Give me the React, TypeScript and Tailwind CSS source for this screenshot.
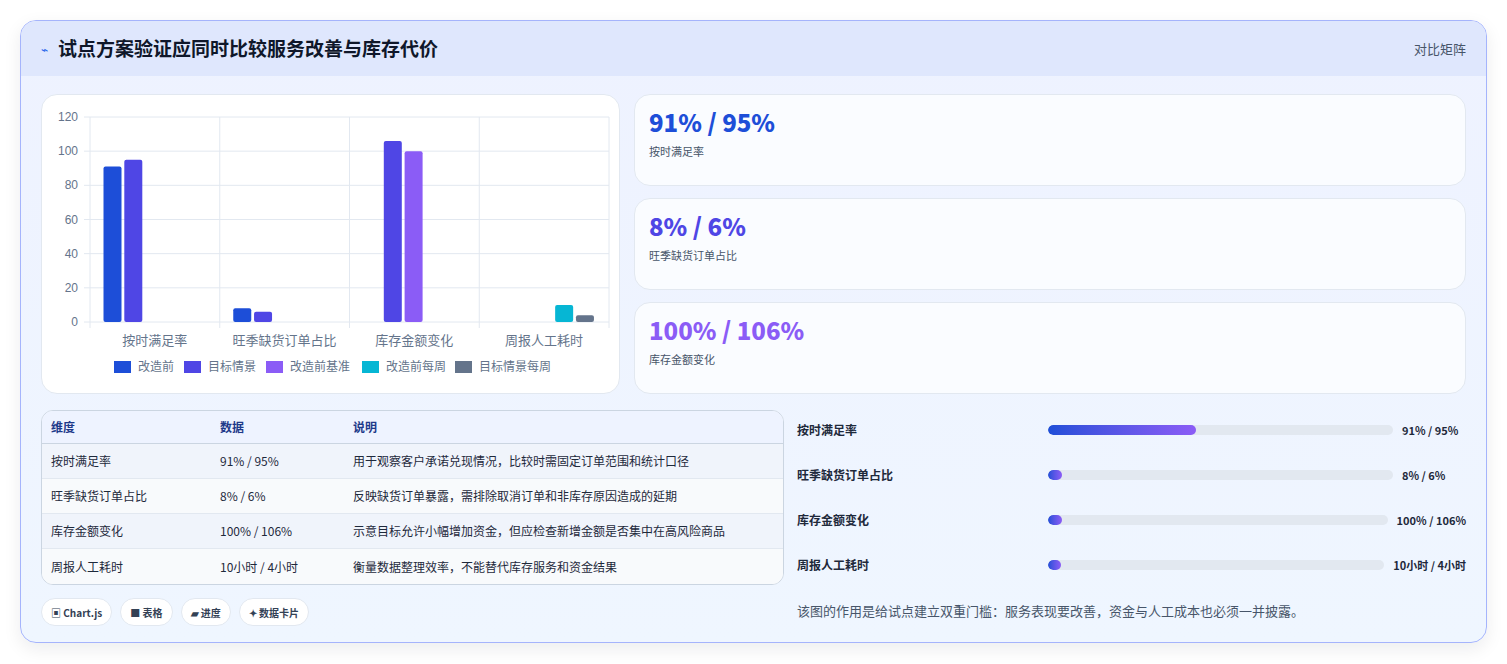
import React from 'react';

const font = { fontFamily: '"Noto Sans CJK SC", "Noto Sans", sans-serif' };

const colors = ['#1d4ed8', '#4f46e5', '#8b5cf6', '#06b6d4', '#64748b'];
const legend = ['改造前', '目标情景', '改造前基准', '改造前每周', '目标情景每周'];
const cats = ['按时满足率', '旺季缺货订单占比', '库存金额变化', '周报人工耗时'];
// [category, dataset, value]
const bars: [number, number, number][] = [
  [0, 0, 91], [0, 1, 95], [1, 0, 8], [1, 1, 6], [2, 1, 106], [2, 2, 100], [3, 3, 10], [3, 4, 4],
];

const Chart = () => {
  // coordinates relative to the card
  const x0 = 48, x1 = 567, yTop = 22, yBot = 227;
  const cw = (x1 - x0) / 4;
  const y = (v: number) => yBot - (v / 120) * (yBot - yTop);
  const legendX = [72, 142, 224, 320, 413];
  return (
    <svg width="579" height="300" viewBox="0 0 579 300" className="block">
      {[0, 20, 40, 60, 80, 100, 120].map((v) => (
        <g key={v}>
          <line x1={x0 - 6} x2={x1} y1={y(v)} y2={y(v)} stroke="#e2e8f0" />
          <text x={x0 - 12} y={y(v) + 4} textAnchor="end" fontSize="12" fill="#64748b" fontFamily="Liberation Sans, sans-serif">{v}</text>
        </g>
      ))}
      {[0, 1, 2, 3, 4].map((i) => (
        <line key={i} x1={x0 + i * cw} x2={x0 + i * cw} y1={yTop} y2={yBot + 6} stroke="#e2e8f0" />
      ))}
      {bars.map(([c, d, v], i) => (
        <rect key={i} x={x0 + c * cw + 13.5 + d * 20.8} y={y(v)} width={18} height={yBot - y(v)} rx={2} fill={colors[d]} />
      ))}
      {cats.map((c, i) => (
        <text key={c} x={x0 + i * cw + cw / 2} y={250} textAnchor="middle" fontSize="13" fill="#64748b" style={font}>{c}</text>
      ))}
      {legend.map((l, i) => (
        <g key={l}>
          <rect x={legendX[i]} y={266} width={17} height={12} fill={colors[i]} />
          <text x={legendX[i] + 24} y={276} fontSize="12" fill="#64748b" style={font}>{l}</text>
        </g>
      ))}
    </svg>
  );
};

const stats = [
  { v: '91% / 95%', l: '按时满足率', c: 'text-[#1d4ed8]' },
  { v: '8% / 6%', l: '旺季缺货订单占比', c: 'text-[#4f46e5]' },
  { v: '100% / 106%', l: '库存金额变化', c: 'text-[#8b5cf6]' },
];

const rows = [
  ['按时满足率', '91% / 95%', '用于观察客户承诺兑现情况，比较时需固定订单范围和统计口径'],
  ['旺季缺货订单占比', '8% / 6%', '反映缺货订单暴露，需排除取消订单和非库存原因造成的延期'],
  ['库存金额变化', '100% / 106%', '示意目标允许小幅增加资金，但应检查新增金额是否集中在高风险商品'],
  ['周报人工耗时', '10小时 / 4小时', '衡量数据整理效率，不能替代库存服务和资金结果'],
];

const progress = [
  { l: '按时满足率', v: '91% / 95%', w: 43 },
  { l: '旺季缺货订单占比', v: '8% / 6%', w: 4 },
  { l: '库存金额变化', v: '100% / 106%', w: 4 },
  { l: '周报人工耗时', v: '10小时 / 4小时', w: 4 },
];

const chips = ['▣ Chart.js', '■ 表格', '▰ 进度', '✦ 数据卡片'];

export default function App() {
  return (
    <div className="min-h-screen bg-white p-5" style={font}>
      <div className="rounded-2xl border border-[#a5b4fc] bg-gradient-to-b from-[#eef2ff] to-[#eff6ff] overflow-hidden shadow-[0_6px_18px_rgba(15,23,42,0.08)]">
        <div className="h-[55px] flex items-center justify-between px-5 bg-[#dfe7fd]">
          <div className="flex items-center gap-2.5">
            <span className="text-[#2563eb] text-xs">⌁</span>
            <h1 className="text-[19px] font-bold text-[#0f172a]">试点方案验证应同时比较服务改善与库存代价</h1>
          </div>
          <span className="text-[13px] text-[#475569]">对比矩阵</span>
        </div>
        <div className="px-5 pt-[18px] pb-[16px]">
          <div className="flex gap-[14px]">
            <div className="w-[579px] h-[300px] shrink-0 rounded-2xl bg-white border border-[#e2e8f0]">
              <Chart />
            </div>
            <div className="flex-1 flex flex-col gap-[12px]">
              {stats.map((s) => (
                <div key={s.l} className="h-[92px] rounded-2xl bg-[#fafcff] border border-[#e2e8f0] px-[14px] pt-[10px]">
                  <div className={`text-[24px] font-extrabold leading-[34px] ${s.c}`}>{s.v}</div>
                  <div className="text-[11px] text-[#475569] mt-1">{s.l}</div>
                </div>
              ))}
            </div>
          </div>
          <div className="flex gap-[13px] mt-[16px]">
            <div className="w-[743px] shrink-0">
              <div className="rounded-xl border border-[#cbd5e1] overflow-hidden bg-white text-[12px]">
                <div className="flex h-[33px] items-center bg-[#eef3ff] text-[#1e3a8a] font-semibold border-b border-[#cbd5e1]">
                  <div className="w-[178px] pl-[9px]">维度</div>
                  <div className="w-[133px]">数据</div>
                  <div>说明</div>
                </div>
                {rows.map((r, i) => (
                  <div key={r[0]} className={`flex h-[35px] items-center text-[#1e293b] ${i % 2 ? 'bg-[#f8fafc]' : 'bg-[#f0f4fb]'} ${i < 3 ? 'border-b border-[#e2e8f0]' : ''}`}>
                    <div className="w-[178px] pl-[9px]">{r[0]}</div>
                    <div className="w-[133px]">{r[1]}</div>
                    <div>{r[2]}</div>
                  </div>
                ))}
              </div>
              <div className="flex gap-2 mt-[13px]">
                {chips.map((c) => (
                  <span key={c} className="h-[28px] px-[9px] flex items-center rounded-full bg-white border border-[#e2e8f0] text-[10px] font-semibold text-[#334155]">{c}</span>
                ))}
              </div>
            </div>
            <div className="flex-1 pl-[0px]">
              <div className="flex flex-col gap-[23px] pt-[9px]">
                {progress.map((p) => (
                  <div key={p.l} className="flex items-center h-[22px] text-[12px]">
                    <div className="w-[251px] text-[#1e293b] font-semibold">{p.l}</div>
                    <div className="flex-1 h-[10px] rounded-full bg-[#e2e8f0] overflow-hidden">
                      <div className="h-full min-w-[13px] rounded-full bg-gradient-to-r from-[#1d4ed8] to-[#8b5cf6]" style={{ width: `${p.w}%` }} />
                    </div>
                    <div className="ml-[9px] min-w-[64px] font-bold text-[11px] text-[#1e293b]">{p.v}</div>
                  </div>
                ))}
              </div>
              <p className="mt-[25px] text-[13px] text-[#475569]">该图的作用是给试点建立双重门槛：服务表现要改善，资金与人工成本也必须一并披露。</p>
            </div>
          </div>
        </div>
      </div>
    </div>
  );
}
